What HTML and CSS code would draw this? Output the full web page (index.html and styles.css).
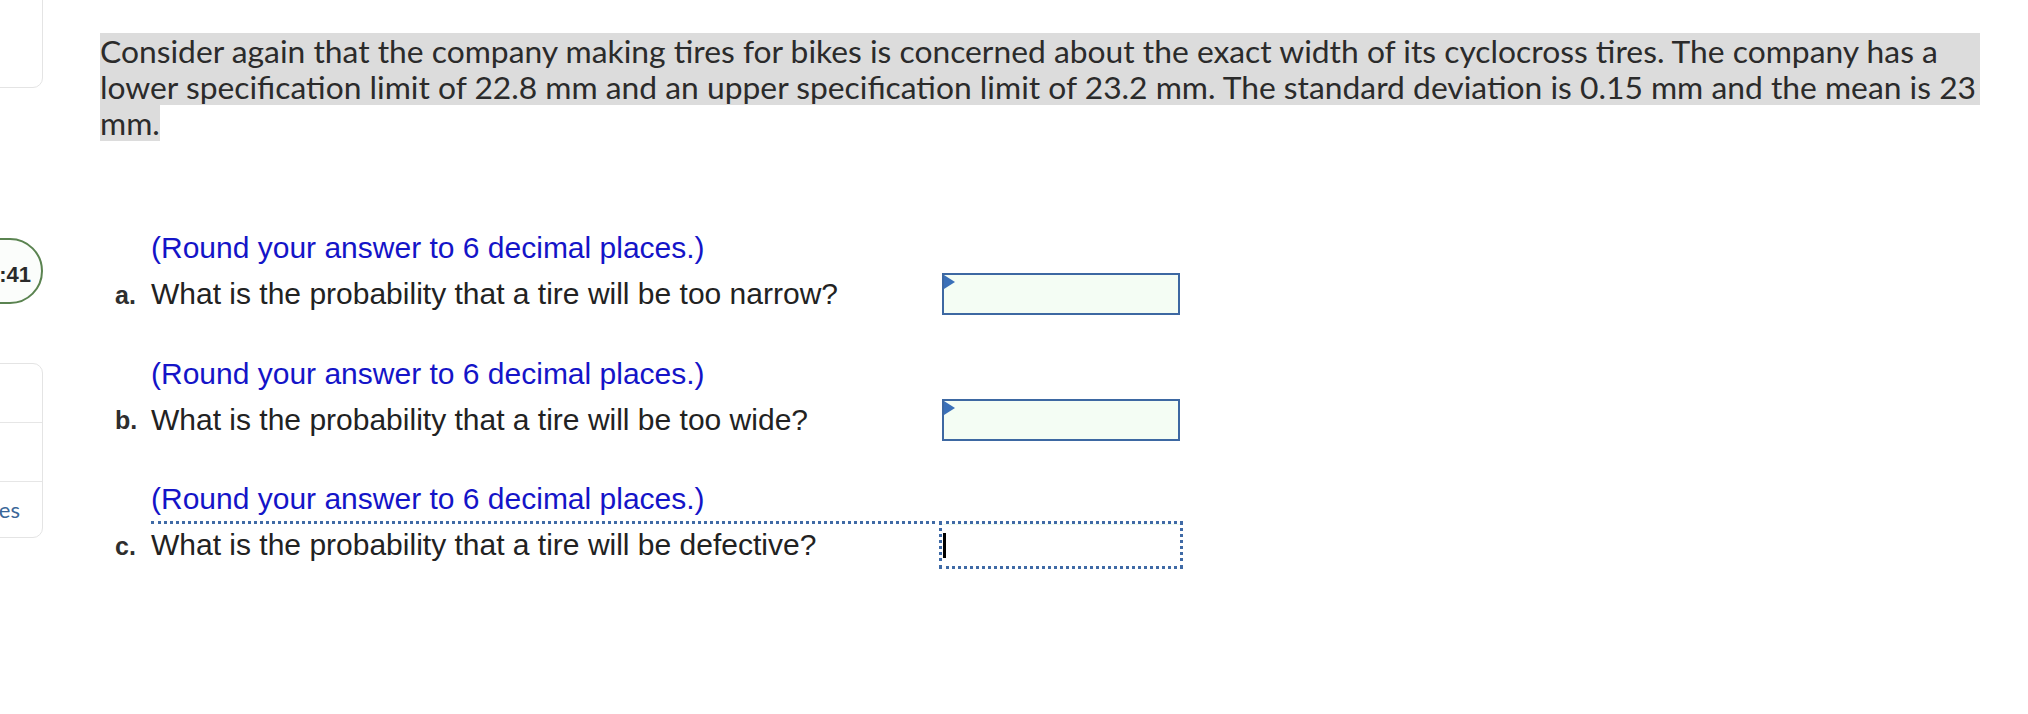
FILE: index.html
```html
<!DOCTYPE html>
<html>
<head>
<meta charset="utf-8">
<link rel="stylesheet" href="styles.css">
</head>
<body>
<div class="page">
  <aside class="sidebar">
    <div class="card card-top"></div>
    <div class="timer"><span class="timer-text">7:41</span></div>
    <div class="card card-list">
      <div class="card-cell"></div>
      <div class="card-cell"></div>
      <div class="card-cell cell-last"><span class="cell-text">Resources</span></div>
    </div>
  </aside>
  <main class="main">
    <p class="para">Consider again that the company making tires for bikes is concerned about the exact width of its cyclocross tires. The company has a lower specification limit of 22.8 mm and an upper specification limit of 23.2 mm. The standard deviation is 0.15 mm and the mean is 23 <span class="sel-end">mm.</span></p>
    <div class="questions">
      <div class="item">
        <div class="hint">(Round your answer to 6 decimal places.)</div>
        <div class="qrow">
          <span class="label">a.</span>
          <span class="qtext">What is the probability that a tire will be too narrow?</span>
          <span class="answer"><span class="flag"></span></span>
        </div>
      </div>
      <div class="item">
        <div class="hint">(Round your answer to 6 decimal places.)</div>
        <div class="qrow">
          <span class="label">b.</span>
          <span class="qtext">What is the probability that a tire will be too wide?</span>
          <span class="answer"><span class="flag"></span></span>
        </div>
      </div>
      <div class="item">
        <div class="hint">(Round your answer to 6 decimal places.)</div>
        <div class="qrow">
          <span class="label">c.</span>
          <span class="qtext qtext-focus">What is the probability that a tire will be defective?</span>
          <span class="answer answer-focus"><span class="caret"></span></span>
        </div>
      </div>
    </div>
  </main>
</div>
</body>
</html>
```
FILE: styles.css
```css
html, body {
  margin: 0;
  padding: 0;
  background: #ffffff;
}

.page {
  display: flex;
  width: 2028px;
  height: 714px;
  overflow: hidden;
}

.sidebar {
  width: 44px;
  flex: 0 0 44px;
  display: flex;
  flex-direction: column;
  align-items: flex-end;
}

.card {
  box-sizing: border-box;
  width: 200px;
  margin-right: 1px;
  border: 1.5px solid #e4e4e4;
  border-radius: 10px;
  background: #fff;
}

.card-top {
  height: 120px;
  margin-top: -32px;
}

.timer {
  box-sizing: border-box;
  width: 200px;
  height: 66px;
  margin-top: 150px;
  margin-right: 1px;
  border: 2px solid #5a8350;
  border-radius: 33px;
  background: #fbfdfb;
  display: flex;
  align-items: center;
  justify-content: flex-end;
  padding: 8px 10px 0 0;
}

.timer-text {
  font-family: "Liberation Sans", Arial, sans-serif;
  font-weight: bold;
  font-size: 22px;
  color: #2a2a2a;
}

.card-list {
  margin-top: 59px;
  height: 175px;
  display: flex;
  flex-direction: column;
}

.card-cell {
  height: 59px;
  border-bottom: 1.5px solid #e6e6e6;
  box-sizing: border-box;
}

.cell-last {
  border-bottom: none;
  flex: 1;
  display: flex;
  align-items: center;
  justify-content: flex-end;
  padding-right: 22px;
}

.cell-text {
  font-family: "Lato", "Open Sans", sans-serif;
  font-size: 22px;
  color: #3a6698;
}

.main {
  margin-left: 56px;
  padding-top: 33px;
  width: 1880px;
}

.para {
  margin: 0;
  width: 1880px;
  font-family: "Lato", "Open Sans", sans-serif;
  font-size: 31.8px;
  line-height: 36px;
  color: #2b2b2b;
  background: linear-gradient(#dcdcdc, #dcdcdc) 0 0 / 100% 72px no-repeat;
}

.sel-end {
  display: inline-block;
  background: #dcdcdc;
  line-height: 36px;
}

.questions {
  margin-top: 89px;
  margin-left: 15px;
  display: flex;
  flex-direction: column;
  gap: 40.5px;
}

.item {
  display: flex;
  flex-direction: column;
  gap: 7px;
}

.hint {
  padding-left: 36px;
  font-family: "Liberation Sans", Arial, sans-serif;
  font-size: 30px;
  line-height: 36px;
  color: #1414c8;
}

.qrow {
  display: flex;
  height: 42px;
  align-items: stretch;
}

.label {
  width: 36px;
  display: flex;
  align-items: center;
  font-family: "Liberation Sans", Arial, sans-serif;
  font-weight: bold;
  font-size: 25px;
  color: #2e2e2e;
  padding-top: 2px;
}

.qtext {
  width: 791px;
  display: flex;
  align-items: center;
  font-family: "Liberation Sans", Arial, sans-serif;
  font-size: 30px;
  color: #222222;
}

.qtext-focus {
  margin-top: -3px;
  border-top: 3px dotted #3f6aa6;
}

.answer {
  position: relative;
  box-sizing: border-box;
  width: 238px;
  height: 42px;
  border: 2px solid #3d68a2;
  background: #f4fdf4;
}

.flag {
  position: absolute;
  top: 0;
  left: 0;
  width: 0;
  height: 0;
  border-left: 11px solid #3a70b8;
  border-top: 7px solid transparent;
  border-bottom: 7px solid transparent;
}

.answer-focus {
  border: none;
  border-top: 1px solid #eefaee;
  background: #ffffff;
  outline: 3px dotted #3f6aa6;
  outline-offset: 0;
  display: flex;
  align-items: center;
}

.caret {
  display: block;
  width: 3px;
  height: 25px;
  margin-left: 1px;
  background: #000;
}
```
